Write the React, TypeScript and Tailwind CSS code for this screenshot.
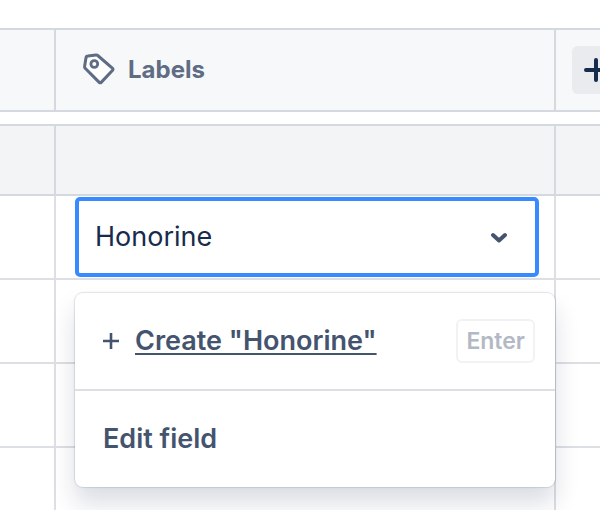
import { useState } from "react";

function TagIcon() {
  return (
    <svg width="34" height="34" viewBox="0 0 34 34" fill="none" className="shrink-0" aria-hidden="true">
      <path
        d="M5.9 3.1 14 1.9a2 2 0 0 1 1.7.6L30.6 15.4a1.3 1.3 0 0 1 0 1.9L19.2 29.4a1.4 1.4 0 0 1-2 0L3.2 15.3a2 2 0 0 1-.6-1.8L4 4.8a2 2 0 0 1 1.9-1.7Z"
        fill="#fff"
        stroke="#5e6c84"
        strokeWidth="3"
        strokeLinejoin="round"
      />
      <circle cx="12.3" cy="11" r="3.4" stroke="#5e6c84" strokeWidth="2.8" />
    </svg>
  );
}

function LabelPicker() {
  const [value, setValue] = useState("Honorine");

  return (
    <div className="relative ml-[19px] mr-[15px]">
      <div className="flex h-20 items-center rounded-[5px] border-4 border-[#388bff] bg-white pl-4 pr-6">
        <input
          aria-label="Labels"
          role="combobox"
          aria-expanded="true"
          aria-controls="label-menu"
          value={value}
          onChange={(event) => setValue(event.target.value)}
          className="min-w-0 flex-1 bg-transparent text-[27px] leading-9 text-[#172b4d] outline-none"
        />
        <button type="button" aria-label="Toggle options" className="p-1">
          <svg width="16" height="12" viewBox="0 0 16 12" fill="none" className="block">
            <path d="m2 4 6 5.5L14 4" stroke="#44546f" strokeWidth="4" strokeLinecap="round" strokeLinejoin="round" />
          </svg>
        </button>
      </div>

      <div
        id="label-menu"
        className="absolute -right-4 left-0 top-24 z-10 rounded-lg bg-white text-[27px] font-semibold leading-9 text-[#44546f] shadow-[0_0_1px_1px_rgba(9,30,66,0.12),0_16px_24px_rgba(9,30,66,0.15)]"
      >
        <div className="flex h-[98px] items-center border-b-2 border-[#dcdfe4] pl-7 pr-5">
          <svg width="16" height="16" viewBox="0 0 16 16" className="mr-4 shrink-0" aria-hidden="true">
            <path d="M8 0v16M0 8h16" stroke="#44546f" strokeWidth="2.6" />
          </svg>
          <button type="button" className="underline decoration-2 underline-offset-3">
            {`Create "${value}"`}
          </button>
          <kbd className="ml-auto rounded-md border-2 border-[#f1f2f4] px-2 font-[Inter,sans-serif] text-[23px] font-semibold leading-10 text-[#b3b9c4]">
            Enter
          </kbd>
        </div>
        <button type="button" className="block h-24 w-full px-7 text-left">
          Edit field
        </button>
      </div>
    </div>
  );
}

const header = "h-[84px] border-y-2 border-[#d3d9df] bg-[#f7f8f9] p-0";
const group = "h-[72px] border-y-2 border-[#d3d9df] bg-[#f3f4f6] p-0";
const cell = "h-[84px] border-b-2 border-[#dcdfe4] p-0";

export default function App() {
  return (
    <main className="h-screen overflow-hidden bg-white pt-7 font-[Inter,sans-serif]">
      <table className="w-full table-fixed border-separate border-spacing-0">
        <colgroup>
          <col className="w-14" />
          <col />
          <col className="w-11" />
        </colgroup>
        <thead>
          <tr>
            <th className={`${header} border-r-2`} />
            <th scope="col" className={`${header} border-r-2`}>
              <div className="flex items-center gap-3 pl-[26px] text-2xl font-bold text-[#5e6c84]">
                <TagIcon />
                Labels
              </div>
            </th>
            <th className={`${header} overflow-hidden`}>
              <button
                type="button"
                aria-label="Add field"
                className="ml-4 flex h-12 w-12 items-center justify-center rounded-md bg-[#e9ebee]"
              >
                <svg width="24" height="24" viewBox="0 0 24 24" fill="none">
                  <path d="M12 2v20M2 12h20" stroke="#172b4d" strokeWidth="4" strokeLinecap="round" />
                </svg>
              </button>
            </th>
          </tr>
        </thead>
        <tbody>
          <tr>
            <td colSpan={3} className="h-3 p-0" />
          </tr>
          <tr>
            <td className={`${group} border-r-2`} />
            <td className={`${group} border-r-2`} />
            <td className={group} />
          </tr>
          <tr>
            <td className={`${cell} border-r-2`} />
            <td className={`${cell} border-r-2`}>
              <LabelPicker />
            </td>
            <td className={cell} />
          </tr>
          {[0, 1, 2].map((row) => (
            <tr key={row}>
              <td className={`${cell} border-r-2`} />
              <td className={`${cell} border-r-2`} />
              <td className={cell} />
            </tr>
          ))}
        </tbody>
      </table>
    </main>
  );
}
